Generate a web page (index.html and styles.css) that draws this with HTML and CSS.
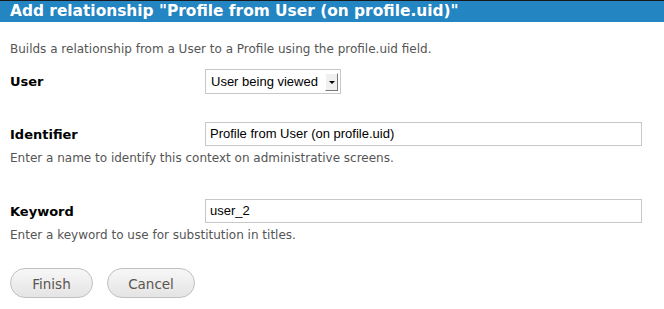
FILE: index.html
```html
<!DOCTYPE html>
<html>
<head>
<meta charset="utf-8">
<link rel="stylesheet" href="styles.css">
</head>
<body>
<div class="dialog">
  <div class="titlebar">Add relationship "Profile from User (on profile.uid)"</div>
  <div class="content">
    <p class="intro">Builds a relationship from a User to a Profile using the profile.uid field.</p>
    <div class="field field-user">
      <label class="label">User</label>
      <div class="select"><span class="select-text">User being viewed</span><span class="select-btn"><span class="arrow"></span></span></div>
    </div>
    <div class="field field-id">
      <label class="label">Identifier</label>
      <div class="input">Profile from User (on profile.uid)</div>
    </div>
    <div class="help">Enter a name to identify this context on administrative screens.</div>
    <div class="field field-kw">
      <label class="label">Keyword</label>
      <div class="input">user_2</div>
    </div>
    <div class="help">Enter a keyword to use for substitution in titles.</div>
    <div class="actions">
      <button class="btn btn-finish">Finish</button>
      <button class="btn btn-cancel">Cancel</button>
    </div>
  </div>
</div>
</body>
</html>
```
FILE: styles.css
```css
html, body { margin: 0; padding: 0; background: #fff; }
.dialog { width: 664px; height: 309px; overflow: hidden; font-family: "DejaVu Sans", sans-serif; }
.titlebar {
  border-top: 1px solid #1a1a1a;
  background: #2385c2;
  color: #fff;
  font-weight: bold;
  font-size: 15.4px;
  height: 21px;
  line-height: 21px;
  padding-left: 10px;
  white-space: nowrap;
}
.content { padding: 0 10px; }
.intro { margin: 0; padding-top: 20px; font-size: 12px; line-height: 14px; color: #555; }
.field { display: flex; align-items: center; }
.label { width: 195px; font-weight: bold; font-size: 13px; color: #000; }
.field-user { margin-top: 13px; height: 24px; }
.field-id { margin-top: 29px; height: 24px; }
.field-kw { margin-top: 34px; height: 24px; }
.select {
  box-sizing: border-box;
  width: 136px; height: 25px;
  border: 1px solid #c8c8c8;
  display: flex; align-items: center;
  font-family: "Liberation Sans", Arial, sans-serif; font-size: 13px; color: #000;
  padding-left: 5px;
}
.select-text { flex: 1; }
.select-btn {
  width: 13px; height: 18px; margin-right: 2px; margin-top: 1px;
  border-right: 1px solid #777; border-bottom: 1px solid #777;
  border-left: 1px solid #fff; border-top: 1px solid #fff;
  background: #f0f0f0; box-sizing: border-box;
  display: flex; align-items: center; justify-content: center;
}
.arrow { width: 0; height: 0; border-left: 3px solid transparent; border-right: 3px solid transparent; border-top: 3px solid #000; margin-top: 2px; }
.input {
  box-sizing: border-box;
  width: 437px; height: 24px;
  border: 1px solid #c8c8c8;
  font-family: "Liberation Sans", Arial, sans-serif; font-size: 13px; color: #000;
  line-height: 22px; padding-left: 4px;
}
.help { font-size: 12px; color: #555; line-height: 14px; margin-top: 5px; }
.actions { display: flex; gap: 14px; margin-top: 26px; }
.btn {
  box-sizing: border-box;
  height: 30px; border-radius: 15px;
  border: 1px solid #c0c0c0;
  background: linear-gradient(#f7f7f7, #e4e4e4);
  font-family: "DejaVu Sans", sans-serif; font-size: 13.5px; color: #5a5550;
  padding: 2px 0 0 0;
}
.btn-finish { width: 83px; }
.btn-cancel { width: 88px; }
```
